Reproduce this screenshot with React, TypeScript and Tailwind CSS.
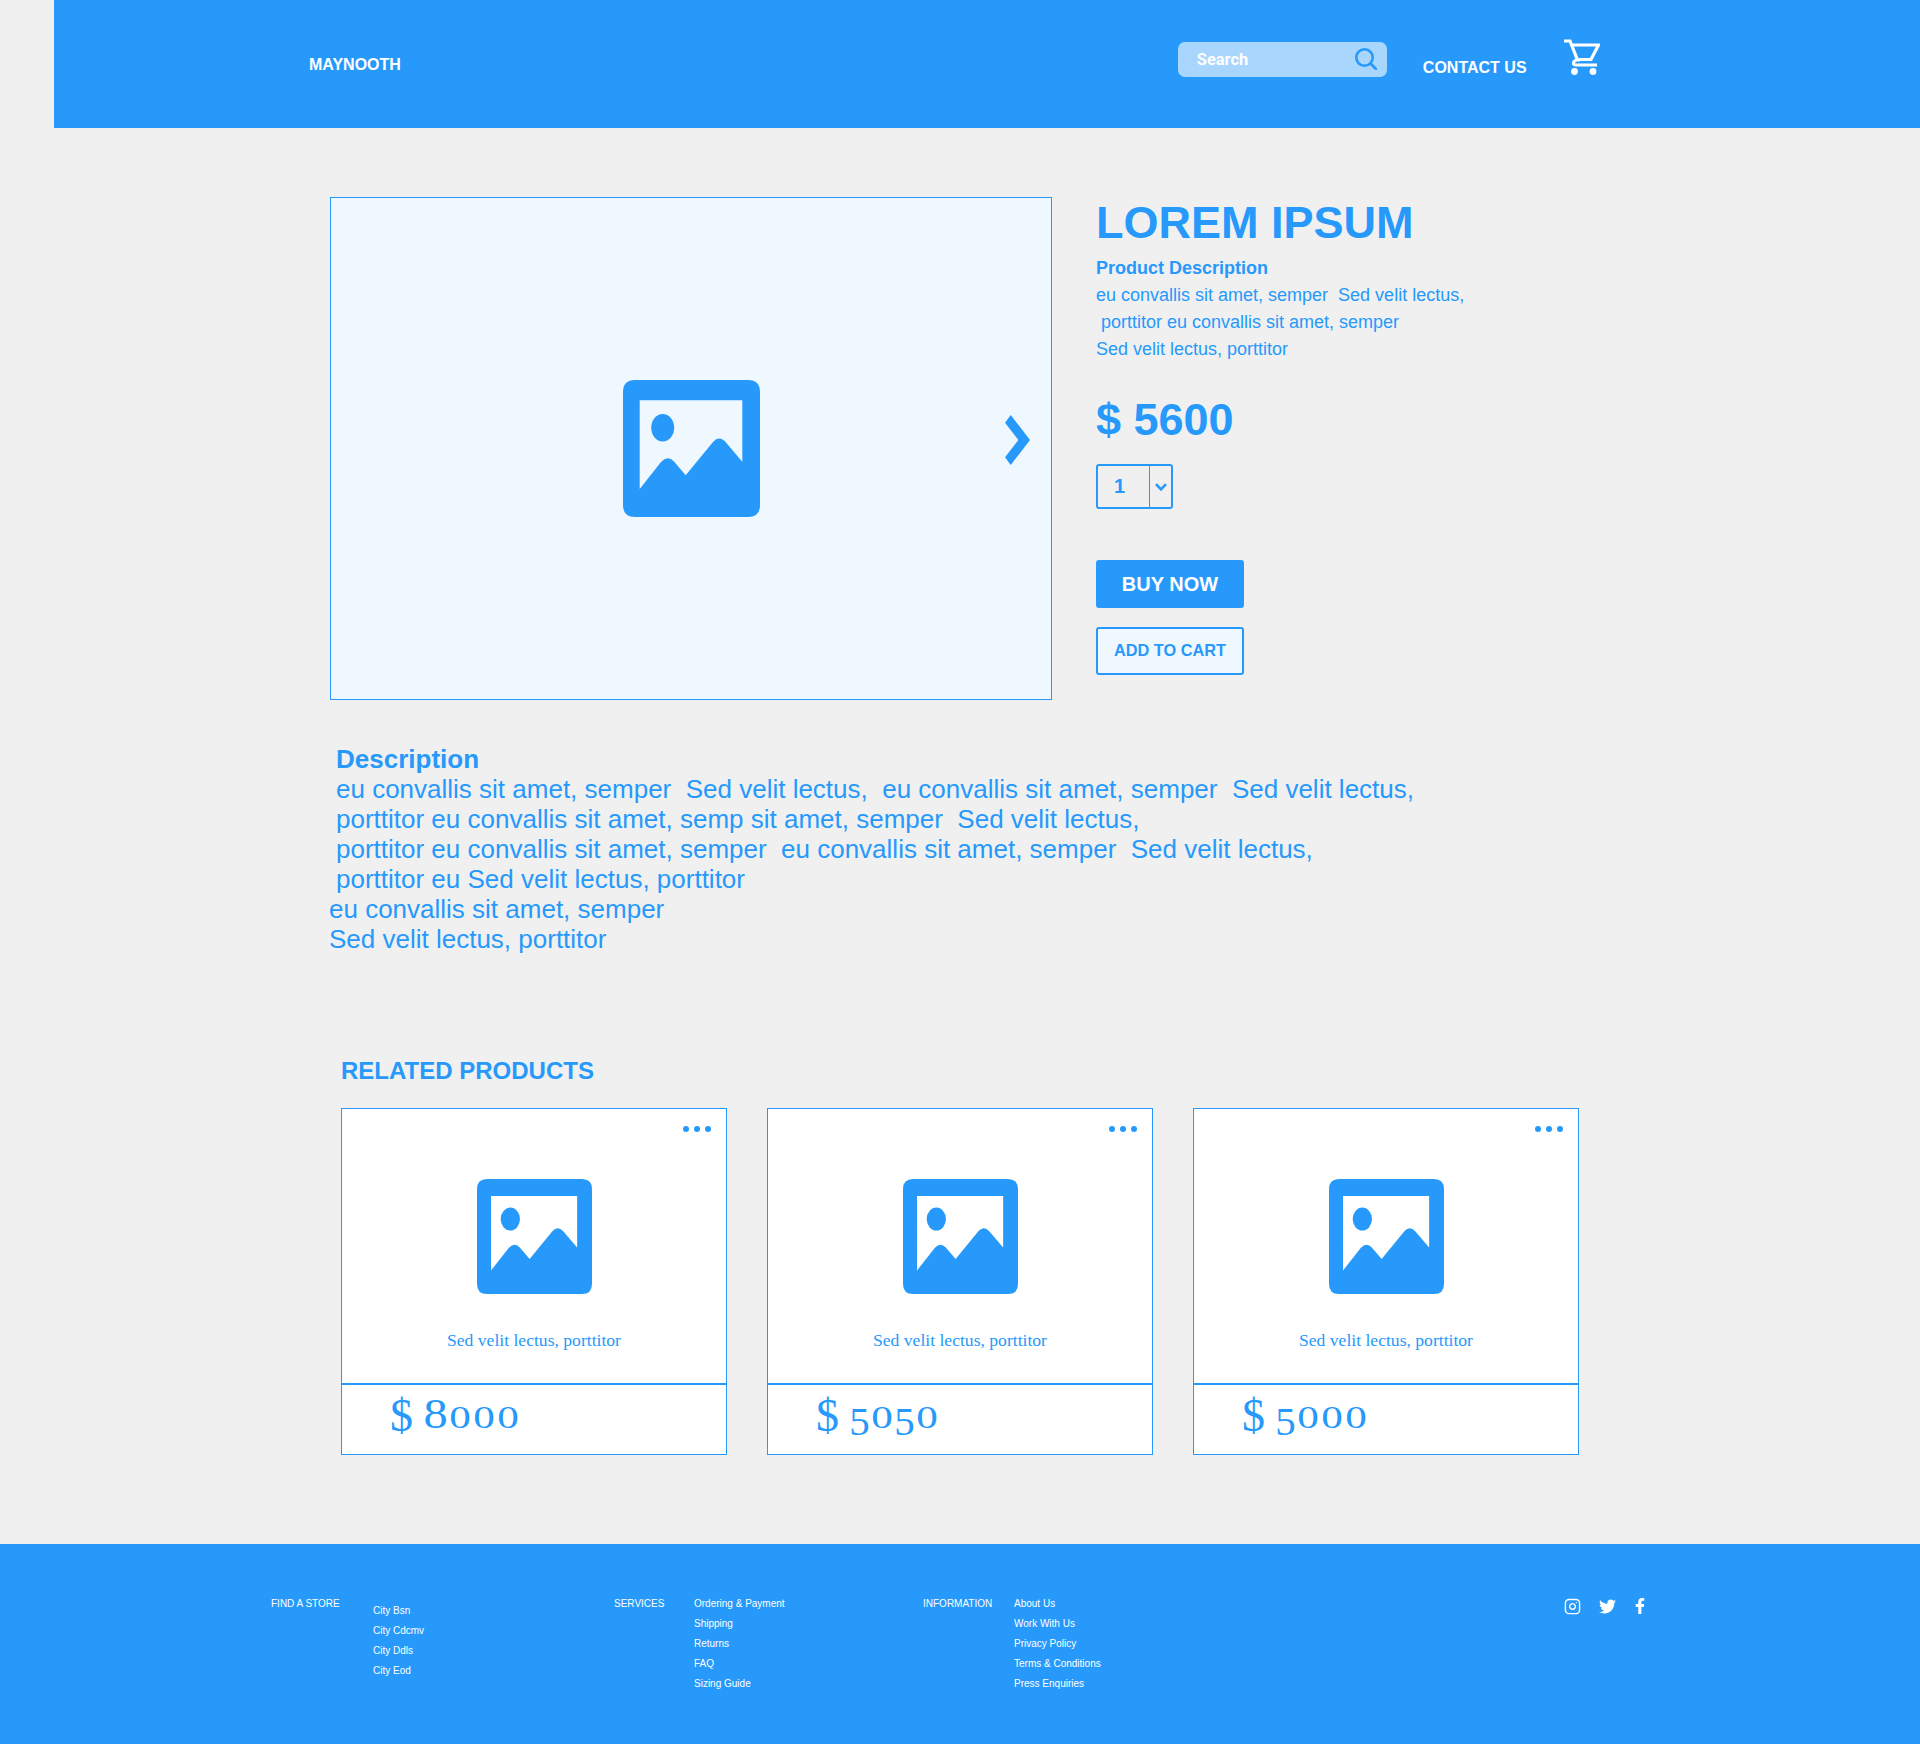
import { FaFacebookF, FaTwitter } from "react-icons/fa";
import { FiInstagram } from "react-icons/fi";

function PictureIcon({ className }: { className: string }) {
  return (
    <svg viewBox="0 0 137 137" className={className} fill="#2699fb">
      <path
        fillRule="evenodd"
        d="M12 0H125Q137 0 137 12V125Q137 137 125 137H12Q0 137 0 125V12Q0 0 12 0ZM16.7 20.3H119.3V81.7L103 62.5Q96.3 55 90 62L62.7 95.3L51 81.5Q44.7 75 38 82L16.7 109Z"
      />
      <ellipse cx="39.7" cy="47.7" rx="11.5" ry="13.7" />
    </svg>
  );
}

const digitClass: Record<string, string> = {
  "0": "inline-block w-[24px] scale-x-[1.35] text-center text-[32px]",
  "5": "inline-block w-[21px] translate-y-[7px] text-center text-[41px]",
  "8": "inline-block w-[25px] scale-x-[1.15] text-center text-[42px]",
};

function Card({ price }: { price: string }) {
  return (
    <div className="flex h-[347px] w-[386px] flex-col border border-[#2699fb] bg-white">
      <div className="flex h-[276px] flex-col border-b-2 border-[#2699fb]">
        <div className="flex justify-end gap-[5px] pt-[17px] pr-[15px]">
          <span className="h-[6px] w-[6px] rounded-full bg-[#2699fb]" />
          <span className="h-[6px] w-[6px] rounded-full bg-[#2699fb]" />
          <span className="h-[6px] w-[6px] rounded-full bg-[#2699fb]" />
        </div>
        <PictureIcon className="mx-auto mt-[47px] h-[115px] w-[115px]" />
        <p className="mt-[36px] text-center font-['Liberation_Serif',serif] text-[17.6px] leading-[20px]">
          Sed velit lectus, porttitor
        </p>
      </div>
      <p className="pt-[3px] pl-[48px] font-['Liberation_Serif',serif] text-[46px] leading-[50px]">
        <span className="inline-block w-[33px] translate-y-[3px]">$</span>
        <span className="sr-only"> </span>
        {price.split("").map((d, i) => (
          <span key={i} className={digitClass[d]}>
            {d}
          </span>
        ))}
      </p>
    </div>
  );
}

const linkClass = "h-[20px] leading-[20px]";

function LinkList({ items, className }: { items: string[]; className: string }) {
  return (
    <ul className={className}>
      {items.map((t) => (
        <li key={t} className={linkClass}>
          {t}
        </li>
      ))}
    </ul>
  );
}

export default function App() {
  return (
    <div className="flex min-h-[1744px] flex-col bg-[#f0f0f0] font-['Liberation_Sans',Arial,sans-serif] text-[#2699fb]">
      <header className="ml-[54px] flex h-[128px] bg-[#2699fb] text-white">
        <span className="mt-[55px] ml-[255px] h-[20px] text-[16px] leading-[20px] font-bold">MAYNOOTH</span>
        <div className="mt-[42px] ml-[777px] flex h-[35px] w-[209px] items-center justify-between rounded-[7px] bg-[#a8d6fd] pr-[10px] pl-[19px]">
          <span className="pt-[1px] font-['Roboto',sans-serif] text-[16.4px] font-bold">Search</span>
          <svg viewBox="0 0 22 22" className="mt-[-2px] h-[22px] w-[22px]" fill="none" stroke="#2699fb" strokeWidth="2.6" strokeLinecap="round">
            <circle cx="9.5" cy="9.5" r="8.2" />
            <path d="M15.5 15.5L21 21" />
          </svg>
        </div>
        <span className="mt-[58px] ml-[36px] h-[20px] text-[16px] leading-[20px] font-bold">CONTACT US</span>
        <svg viewBox="0 0 36 37" className="mt-[39px] ml-[37px] h-[37px] w-[36px]" fill="none" stroke="#ffffff" strokeWidth="3.2">
          <path d="M0 2H6L13.5 21Q10.5 21 9.5 23.5Q9 26 12 26H33" />
          <path d="M7.5 6H34.5L27 20.5H13.5" />
          <circle cx="10.5" cy="32.5" r="3.4" fill="#ffffff" stroke="none" />
          <circle cx="29" cy="32.5" r="3.4" fill="#ffffff" stroke="none" />
        </svg>
      </header>

      <main className="ml-[330px] flex flex-col pt-[69px]">
        <section className="flex">
          <div className="flex h-[503px] w-[722px] items-center border border-[#2699fb] bg-[#f0f8ff] pl-[291.5px]">
            <PictureIcon className="h-[137px] w-[137px]" />
            <svg viewBox="0 0 25 50" className="mt-[-18px] ml-[245.5px] h-[50px] w-[25px]" fill="#2699fb">
              <polygon points="5.7,0 25,25 5.7,50 0,42.3 13.3,25 0,7.7" />
            </svg>
          </div>
          <div className="ml-[44px] flex flex-col items-start">
            <h1 className="pt-[1px] text-[45px] leading-[50px] font-bold">LOREM IPSUM</h1>
            <div className="mt-[7px] text-[18px] leading-[27px]">
              <p className="font-bold">Product Description</p>
              <p>eu convallis sit amet, semper&nbsp; Sed velit lectus,</p>
              <p>&nbsp;porttitor eu convallis sit amet, semper</p>
              <p>Sed velit lectus, porttitor</p>
            </div>
            <p className="mt-[32px] text-[45px] leading-[50px] font-bold">$ 5600</p>
            <div className="mt-[19px] flex h-[45px] w-[77px] rounded-[3px] border-2 border-[#2699fb]">
              <span className="flex w-[51px] items-center justify-center pr-[8px] pb-[2px] text-[20px] font-bold">1</span>
              <span className="flex flex-1 items-center justify-center border-l border-[#2699fb]">
                <svg viewBox="0 0 12 8" className="h-[8px] w-[12px]" fill="none" stroke="#2699fb" strokeWidth="2.6">
                  <path d="M1 1.2L6 6.4L11 1.2" />
                </svg>
              </span>
            </div>
            <button className="mt-[51px] flex h-[48px] w-[148px] items-center justify-center rounded-[3px] bg-[#2699fb] pb-[1px] text-[20px] font-bold text-white">
              BUY NOW
            </button>
            <button className="mt-[19px] flex h-[48px] w-[148px] items-center justify-center rounded-[3px] border-2 border-[#2699fb] bg-[#f0f8ff] pb-[1px] text-[16.3px] font-bold">
              ADD TO CART
            </button>
          </div>
        </section>

        <section className="mt-[44px] ml-[-1px] text-[26px] leading-[30px]">
          <div className="pl-[7px]">
            <p className="font-bold">Description</p>
            <p>eu convallis sit amet, semper&nbsp; Sed velit lectus,&nbsp; eu convallis sit amet, semper&nbsp; Sed velit lectus,</p>
            <p>porttitor eu convallis sit amet, semp sit amet, semper&nbsp; Sed velit lectus,</p>
            <p>porttitor eu convallis sit amet, semper&nbsp; eu convallis sit amet, semper&nbsp; Sed velit lectus,</p>
            <p>porttitor eu Sed velit lectus, porttitor</p>
          </div>
          <p>eu convallis sit amet, semper</p>
          <p>Sed velit lectus, porttitor</p>
        </section>

        <section className="mt-[103px] pl-[11px]">
          <h2 className="text-[24px] leading-[28px] font-bold">RELATED PRODUCTS</h2>
          <div className="mt-[23px] flex gap-[40px]">
            <Card price="8000" />
            <Card price="5050" />
            <Card price="5000" />
          </div>
        </section>
      </main>

      <footer className="mt-[89px] flex h-[200px] bg-[#2699fb] pt-[50px] pl-[271px] text-[10px] text-white">
        <span className="h-[20px] w-[102px] leading-[20px]">FIND A STORE</span>
        <LinkList className="mt-[7px] w-[241px]" items={["City Bsn", "City Cdcmv", "City Ddls", "City Eod"]} />
        <span className="h-[20px] w-[80px] leading-[20px]">SERVICES</span>
        <LinkList className="w-[229px]" items={["Ordering & Payment", "Shipping", "Returns", "FAQ", "Sizing Guide"]} />
        <span className="h-[20px] w-[91px] leading-[20px]">INFORMATION</span>
        <LinkList className="w-[550px]" items={["About Us", "Work With Us", "Privacy Policy", "Terms & Conditions", "Press Enquiries"]} />
        <div className="mt-[3px] flex h-[18px] items-center">
          <FiInstagram className="h-[17px] w-[17px]" />
          <FaTwitter className="ml-[18px] h-[17px] w-[17px]" />
          <FaFacebookF className="ml-[19px] h-[16px] w-[10px]" />
        </div>
      </footer>
    </div>
  );
}
